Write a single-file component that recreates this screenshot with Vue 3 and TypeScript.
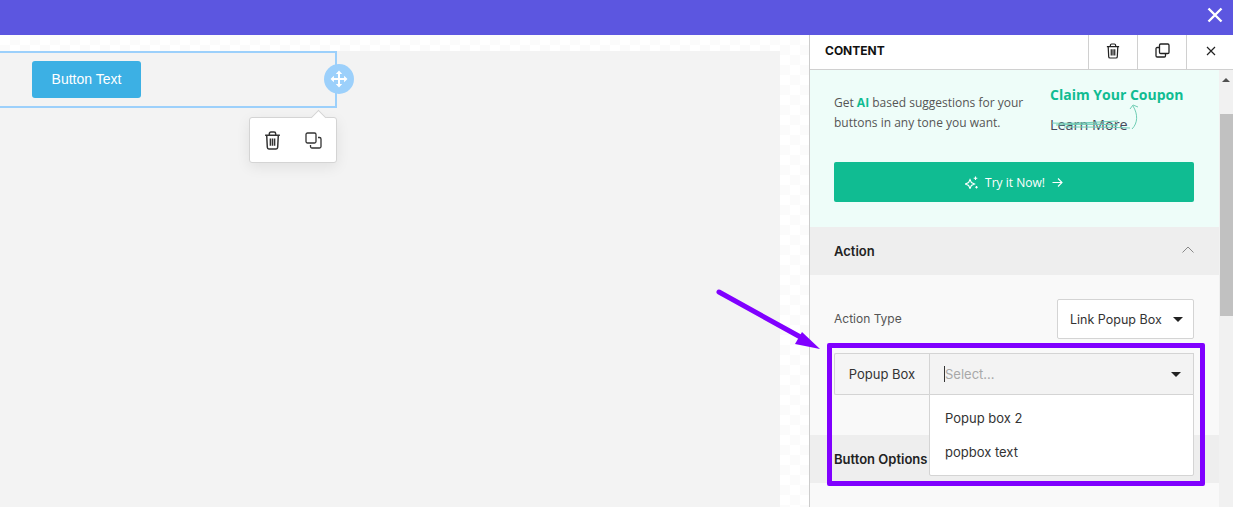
<script setup lang="ts">
const options: string[] = ['Popup box 2', 'popbox text']
</script>

<template>
  <div class="app">
    <header class="topbar">
      <svg class="top-close" width="16" height="16" viewBox="0 0 16 16"><path d="M1.500 1.500l13 13M14.500 1.500l-13 13" stroke="#fff" stroke-width="2.400" fill="none" /></svg>
    </header>
    <main class="main">
      <section class="canvas">
        <div class="stage">
          <div class="element">
            <button class="cta">Button Text</button>
            <div class="handle">
              <svg width="20" height="20" viewBox="0 0 20 20" fill="#fff"><path d="M10 1.500l3.200 3.400h-2.200v4.100h4.100V6.800l3.400 3.200-3.400 3.200v-2.200H11v4.100h2.200L10 18.500l-3.200-3.400H9v-4.100H4.900v2.200L1.500 10l3.400-3.200v2.200H9V4.900H6.800z" /></svg>
            </div>
            <div class="tools">
              <svg width="17" height="19" viewBox="0 0 16 18" fill="none" stroke="#333" stroke-width="1.400"><path d="M1 4h14M5 4V2.500C5 1.700 5.700 1 6.500 1h3c.8 0 1.500.7 1.500 1.500V4M2.500 4l.6 11.500c0 .8.700 1.500 1.500 1.500h6.800c.8 0 1.500-.7 1.500-1.500L13.500 4M6 7v7M8 7v7M10 7v7" /></svg>
              <svg width="17" height="17" viewBox="0 0 17 17" fill="none" stroke="#333" stroke-width="1.300"><rect x="1" y="1" width="10" height="10" rx="1.500" /><path d="M13 5.500h1.500c.8 0 1.500.7 1.500 1.500v7.500c0 .8-.7 1.500-1.500 1.500H7c-.8 0-1.500-.7-1.500-1.500V13" /></svg>
            </div>
          </div>
        </div>
      </section>

      <aside class="panel">
        <div class="panel-head">
          <strong class="panel-title">CONTENT</strong>
          <span class="head-btn">
            <svg width="14" height="16" viewBox="0 0 16 18" fill="none" stroke="#222" stroke-width="1.400"><path d="M1 4h14M5 4V2.500C5 1.700 5.700 1 6.500 1h3c.8 0 1.500.7 1.500 1.500V4M2.500 4l.6 11.500c0 .8.700 1.500 1.500 1.500h6.800c.8 0 1.500-.7 1.500-1.500L13.500 4M6 7v7M8 7v7M10 7v7" /></svg>
          </span>
          <span class="head-btn">
            <svg width="15" height="15" viewBox="0 0 15 15" fill="none" stroke="#222" stroke-width="1.300"><rect x="4.500" y="1" width="9.500" height="9.500" rx="1.200" /><path d="M4.500 4.500H2.200C1.500 4.500 1 5 1 5.700v7.100c0 .7.500 1.200 1.200 1.200h7.100c.7 0 1.200-.5 1.200-1.200v-2.300" /></svg>
          </span>
          <span class="head-btn head-close">
            <svg width="10" height="10" viewBox="0 0 10 10"><path d="M1 1l8 8M9 1l-8 8" stroke="#222" stroke-width="1.200" fill="none" /></svg>
          </span>
        </div>

        <div class="panel-scroll">
          <div class="panel-content">
            <div class="promo">
              <div class="promo-top">
                <p class="promo-text">Get <b>AI</b> based suggestions for your<br />buttons in any tone you want.</p>
                <div class="promo-links">
                  <span class="claim">Claim Your Coupon</span>
                  <span class="learn">Learn More</span>
                  <svg class="scribble" width="90" height="30" viewBox="0 0 90 30" fill="none" stroke="#6fcdb4" stroke-width="1"><path d="M2 22c20 1 45-1 66-2M6 24c20-1 45-1 62 0M14 26c20 0 45 0 66 1M20 23c15 0 30 0 46 1" /><path d="M82 28c6-6 6-15 1-23M80 8l3-4 5 2" /></svg>
                </div>
              </div>
              <button class="try">
                <svg width="13" height="13" viewBox="0 0 13 13" fill="none" stroke="#fff" stroke-width="1.100"><path d="M5 3.500l1.400 3.100L9.500 8 6.400 9.400 5 12.500 3.600 9.400.5 8l3.100-1.400z" /><path d="M10.500.5v3.600M8.700 2.300h3.600M11.500 10v2.600M10.200 11.300h2.600" /></svg>
                <span>Try it Now!</span>
                <svg width="11" height="11" viewBox="0 0 11 11" fill="none" stroke="#fff" stroke-width="1.100"><path d="M.5 5.500h9.500M6 1.500l4 4-4 4" /></svg>
              </button>
            </div>

            <div class="sec-head">
              <span>Action</span>
              <svg width="12" height="7" viewBox="0 0 12 7" fill="none" stroke="#888" stroke-width="1"><path d="M.5 6.500L6 1l5.500 5.500" /></svg>
            </div>

            <div class="sec-body">
              <div class="action-row">
                <label class="action-label">Action Type</label>
                <div class="select">
                  <span>Link Popup Box</span>
                  <i class="caret"></i>
                </div>
              </div>
              <div class="popup-row">
                <div class="popup-label">Popup Box</div>
                <div class="popup-field">
                  <span class="cursor"></span>
                  <span class="placeholder">Select...</span>
                  <i class="caret"></i>
                  <ul class="menu">
                    <li v-for="o in options" :key="o">{{ o }}</li>
                  </ul>
                </div>
              </div>
            </div>

            <div class="sec-head sec-head-2"><span>Button Options</span></div>
            <div class="sec-tail"></div>
          </div>
          <div class="scrollbar">
            <i class="scroll-up"></i>
            <div class="thumb"></div>
          </div>
        </div>
      </aside>

      <div class="highlight"></div>
      <svg class="arrow" width="120" height="70" viewBox="0 0 120 70"><path d="M3 3L88 50" stroke="#8000ff" stroke-width="5" stroke-linecap="round" fill="none" /><path d="M104 60L79 55 86 43z" fill="#8000ff" /></svg>
    </main>
  </div>
</template>

<style>
html, body { margin: 0; overflow: hidden; }
</style>

<style scoped>
.app { width: 1233px; height: 507px; display: flex; flex-direction: column; overflow: hidden; font-family: "Liberation Sans", Arial, sans-serif; background: #fff; }
.topbar { height: 35px; flex: none; background: #5c56e0; display: flex; align-items: center; justify-content: flex-end; padding-right: 10px; box-sizing: border-box; }
.top-close { display: block; margin-top: -5px; }
.main { flex: 1; display: flex; position: relative; min-height: 0; }
.canvas { width: 809px; flex: none; padding-top: 16px; box-sizing: border-box; background-color: #fff; background-image: linear-gradient(45deg, #fbfbfb 25%, transparent 25%, transparent 75%, #fbfbfb 75%), linear-gradient(45deg, #fbfbfb 25%, transparent 25%, transparent 75%, #fbfbfb 75%); background-size: 20px 20px; background-position: 0 0, 10px 10px; }
.stage { width: 780px; height: 456px; background: #f3f3f3; }
.element { position: relative; width: 337px; height: 57px; box-sizing: border-box; border: 2px solid #9cd0fb; border-left: none; padding: 8px 0 0 32px; }
.cta { width: 109px; height: 37px; border: none; border-radius: 3px; background: #3cb0e4; color: #fff; font: 14px/37px "Liberation Sans", Arial, sans-serif; padding: 0; display: block; }
.handle { position: absolute; right: -19px; top: 11px; width: 30px; height: 30px; border-radius: 50%; background: #9cd0fb; display: flex; align-items: center; justify-content: center; }
.tools { position: absolute; left: 249px; top: 64px; width: 88px; height: 46px; box-sizing: border-box; background: #fff; border: 1px solid #d4d4d4; border-radius: 3px; box-shadow: 0 4px 14px rgba(0,0,0,.08); display: flex; align-items: center; justify-content: space-between; padding: 0 14px 0 14px; }
.tools::before { content: ""; position: absolute; right: 12px; top: -6px; width: 10px; height: 10px; background: #fff; border-left: 1px solid #d4d4d4; border-top: 1px solid #d4d4d4; transform: rotate(45deg); }
.panel { width: 424px; flex: none; box-sizing: border-box; border-left: 1px solid #ccc; background: #fff; display: flex; flex-direction: column; }
.panel-head { height: 35px; flex: none; box-sizing: border-box; border-bottom: 1px solid #d0d0d0; display: flex; align-items: stretch; }
.panel-title { flex: 1; padding-left: 15px; font: 700 12px/31px Inter, "Liberation Sans", sans-serif; color: #111; }
.head-btn { width: 49px; box-sizing: border-box; border-left: 1px solid #d0d0d0; display: flex; align-items: center; justify-content: center; padding-bottom: 3px; }
.head-close { width: 47px; padding-left: 2px; }
.panel-scroll { flex: 1; display: flex; min-height: 0; overflow: hidden; }
.panel-content { width: 409px; flex: none; background: #f9f9f9; }
.promo { height: 157px; box-sizing: border-box; background: #eefdf9; padding: 16px 25px 0 24px; }
.promo-top { display: flex; height: 76px; }
.promo-text { margin: 7px 0 0; width: 216px; font: 12px/20px "Open Sans", sans-serif; color: #555; }
.promo-text b { color: #10bc92; font-weight: 700; }
.promo-links { position: relative; display: flex; flex-direction: column; }
.claim { font: 700 14px/17px "Open Sans", sans-serif; color: #10bc92; white-space: nowrap; }
.learn { margin-top: 12px; font: 14.400px/19px "Open Sans", sans-serif; color: #44495a; white-space: nowrap; }
.scribble { position: absolute; left: 0; top: 15px; }
.try { width: 360px; height: 40px; border: none; border-radius: 2px; background: #10bc92; color: #fff; font: 12px "Open Sans", sans-serif; display: flex; align-items: center; justify-content: center; gap: 7px; padding: 0; }
.sec-head { height: 48px; box-sizing: border-box; background: #eee; padding: 0 25px 0 24px; display: flex; align-items: center; justify-content: space-between; font: 600 13px Inter, "Liberation Sans", sans-serif; color: #222; }
.sec-head svg { margin-bottom: 3px; }
.sec-head-2 { padding: 0 0 0 24px; }
.sec-body { height: 160px; box-sizing: border-box; padding: 24px 25px 0 24px; }
.action-row { display: flex; align-items: center; justify-content: space-between; height: 40px; }
.action-label { font: 12px Inter, "Liberation Sans", sans-serif; color: #555; margin-top: -2px; }
.select { width: 137px; height: 40px; box-sizing: border-box; background: #fff; border: 1px solid #d4d4d4; border-radius: 2px; display: flex; align-items: center; justify-content: space-between; padding: 0 10px 0 12px; font: 12.500px Inter, "Liberation Sans", sans-serif; color: #333; }
.caret { width: 0; height: 0; border: 5px solid transparent; border-top: 5px solid #222; border-bottom: none; flex: none; }
.popup-row { display: flex; height: 42px; margin-top: 14px; }
.popup-label { width: 95px; box-sizing: border-box; flex: none; border: 1px solid #d4d4d4; border-right: none; border-radius: 2px 0 0 2px; background: #f5f5f5; font: 13px/40px Inter, "Liberation Sans", sans-serif; color: #333; text-align: center; }
.popup-field { position: relative; flex: 1; box-sizing: border-box; border: 1px solid #d4d4d4; background: #f3f3f3; display: flex; align-items: center; padding: 0 12px 0 14px; }
.cursor { width: 1px; height: 16px; background: #333; flex: none; }
.placeholder { flex: 1; font: 13px Inter, "Liberation Sans", sans-serif; color: #a8a8a8; margin-top: -1px; }
.menu { position: absolute; left: -1px; right: -1px; top: 40px; height: 82px; margin: 0; padding: 6px 0 0; box-sizing: border-box; list-style: none; background: #fff; border: 1px solid #d4d4d4; border-radius: 0 0 2px 2px; }
.menu li { height: 34px; padding-left: 15px; font: 13px/34px Inter, "Liberation Sans", sans-serif; color: #333; }
.sec-tail { height: 24px; background: #f9f9f9; }
.scrollbar { width: 14px; flex: none; background: #f1f1f1; position: relative; }
.scroll-up { position: absolute; left: 3px; top: 8px; width: 0; height: 0; border: 4px solid transparent; border-bottom: 4px solid #505050; border-top: none; }
.thumb { position: absolute; left: 1px; right: 0; top: 44px; height: 202px; background: #c1c1c1; }
.highlight { position: absolute; left: 827px; top: 308px; width: 378px; height: 143px; box-sizing: border-box; border: 5px solid #8000ff; border-radius: 2px; }
.arrow { position: absolute; left: 716px; top: 254px; }
</style>
